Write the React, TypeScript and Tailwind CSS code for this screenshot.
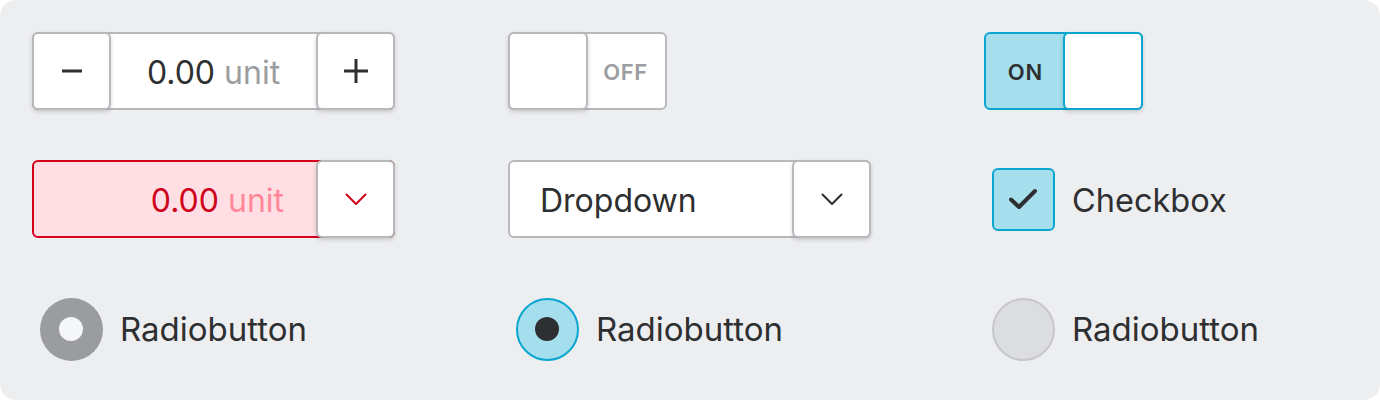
import React from "react";

const font = { fontFamily: "Inter, 'Noto Sans', sans-serif" };

function Chevron({ color }: { color: string }) {
  return (
    <svg width="22" height="13" viewBox="0 0 22 13" fill="none">
      <path d="M1.5 1.5 11 11l9.5-9.5" stroke={color} strokeWidth="2" strokeLinecap="round" strokeLinejoin="round" />
    </svg>
  );
}

function SideButton({ children }: { children: React.ReactNode }) {
  return (
    <div className="-m-[2px] flex h-[78px] w-[79px] shrink-0 items-center justify-center rounded-md border-2 border-[#b7b9bd] bg-white shadow-[0_2px_4px_rgba(0,0,0,0.16)]">
      {children}
    </div>
  );
}

function Stepper() {
  return (
    <div className="flex h-[78px] w-[363px] items-center rounded-md border-2 border-[#b7b9bd] bg-white">
      <SideButton>
        <svg width="20" height="4" viewBox="0 0 20 4">
          <rect x="0" y="0.5" width="20" height="3" fill="#2e2f31" />
        </svg>
      </SideButton>
      <div className="flex flex-1 items-center justify-center pt-[4px] text-[32px]">
        <span className="text-[#2e2f31]">0.00</span>
        <span className="ml-[9px] text-[#9b9da1]">unit</span>
      </div>
      <SideButton>
        <svg width="24" height="24" viewBox="0 0 24 24">
          <rect x="0" y="10.5" width="24" height="3" fill="#2e2f31" />
          <rect x="10.5" y="0" width="3" height="24" fill="#2e2f31" />
        </svg>
      </SideButton>
    </div>
  );
}

function ErrorInput() {
  return (
    <div className="flex h-[78px] w-[363px] items-center rounded-md border-2 border-[#d6001c] bg-[#ffdfe3]">
      <div className="flex flex-1 items-center justify-end pr-[34px] pt-[4px] text-[32px]">
        <span className="text-[#d0021b]">0.00</span>
        <span className="ml-[9px] text-[#ff8799]">unit</span>
      </div>
      <SideButton>
        <Chevron color="#d0021b" />
      </SideButton>
    </div>
  );
}

function Dropdown() {
  return (
    <div className="flex h-[78px] w-[363px] items-center rounded-md border-2 border-[#b7b9bd] bg-white">
      <div className="flex-1 pl-[30px] pt-[4px] text-[32px] text-[#2e2f31]">Dropdown</div>
      <SideButton>
        <Chevron color="#2e2f31" />
      </SideButton>
    </div>
  );
}

function ToggleOff() {
  return (
    <div className="flex h-[78px] w-[159px] items-center rounded-md border-2 border-[#b7b9bd] bg-white">
      <div className="-m-[2px] h-[78px] w-[80px] shrink-0 rounded-md border-2 border-[#b7b9bd] bg-white shadow-[0_2px_4px_rgba(0,0,0,0.16)]" />
      <div className="flex-1 pt-[3px] text-center text-[22px] font-semibold tracking-[0.5px] text-[#9b9da1]">OFF</div>
    </div>
  );
}

function ToggleOn() {
  return (
    <div className="flex h-[78px] w-[159px] items-center rounded-md border-2 border-[#0aa6d0] bg-[#a5dfee]">
      <div className="flex-1 pt-[3px] text-center text-[22px] font-semibold tracking-[1px] text-[#2e2f31]">ON</div>
      <div className="-m-[2px] h-[78px] w-[80px] shrink-0 rounded-md border-2 border-[#0aa6d0] bg-white shadow-[0_2px_4px_rgba(0,0,0,0.16)]" />
    </div>
  );
}

function Checkbox() {
  return (
    <div className="flex h-[78px] items-center">
      <div className="flex h-[78px] w-[78px] items-center justify-center">
        <div className="flex h-[63px] w-[63px] items-center justify-center rounded-md border-2 border-[#0aa6d0] bg-[#a5dfee]">
          <svg width="32" height="24" viewBox="0 0 32 24" fill="none">
            <path d="M4 12.5 12 20 28 4" stroke="#2e2f31" strokeWidth="4" strokeLinecap="round" strokeLinejoin="round" />
          </svg>
        </div>
      </div>
      <span className="ml-[10px] pt-[4px] text-[32.5px] text-[#2e2f31]">Checkbox</span>
    </div>
  );
}

function Radio({ variant }: { variant: "gray" | "blue" | "empty" }) {
  let circle;
  if (variant === "gray") {
    circle = (
      <div className="flex h-[63px] w-[63px] items-center justify-center rounded-full bg-[#9a9ca0]">
        <div className="h-[24px] w-[24px] rounded-full bg-[#f5f6f7]" />
      </div>
    );
  } else if (variant === "blue") {
    circle = (
      <div className="flex h-[63px] w-[63px] items-center justify-center rounded-full border-2 border-[#0aa6d0] bg-[#a5dfee]">
        <div className="h-[24px] w-[24px] rounded-full bg-[#2e2f31]" />
      </div>
    );
  } else {
    circle = <div className="h-[63px] w-[63px] rounded-full border-2 border-[#c6c7c9] bg-[#dcdddf]" />;
  }
  return (
    <div className="flex h-[78px] items-center">
      <div className="flex h-[78px] w-[78px] items-center justify-center">{circle}</div>
      <span className="ml-[10px] pt-[2px] text-[33px] text-[#2e2f31]">Radiobutton</span>
    </div>
  );
}

export default function App() {
  return (
    <div className="h-[400px] w-[1380px] bg-white" style={font}>
      <div className="h-[400px] w-[1380px] rounded-[16px] bg-[#edeef0] px-8 pt-8">
        <div className="grid grid-cols-[476px_476px_1fr] gap-y-[50px]">
          <Stepper />
          <ToggleOff />
          <ToggleOn />
          <ErrorInput />
          <Dropdown />
          <Checkbox />
        </div>
        <div className="mt-[52px] grid grid-cols-[476px_476px_1fr]">
          <Radio variant="gray" />
          <Radio variant="blue" />
          <Radio variant="empty" />
        </div>
      </div>
    </div>
  );
}
